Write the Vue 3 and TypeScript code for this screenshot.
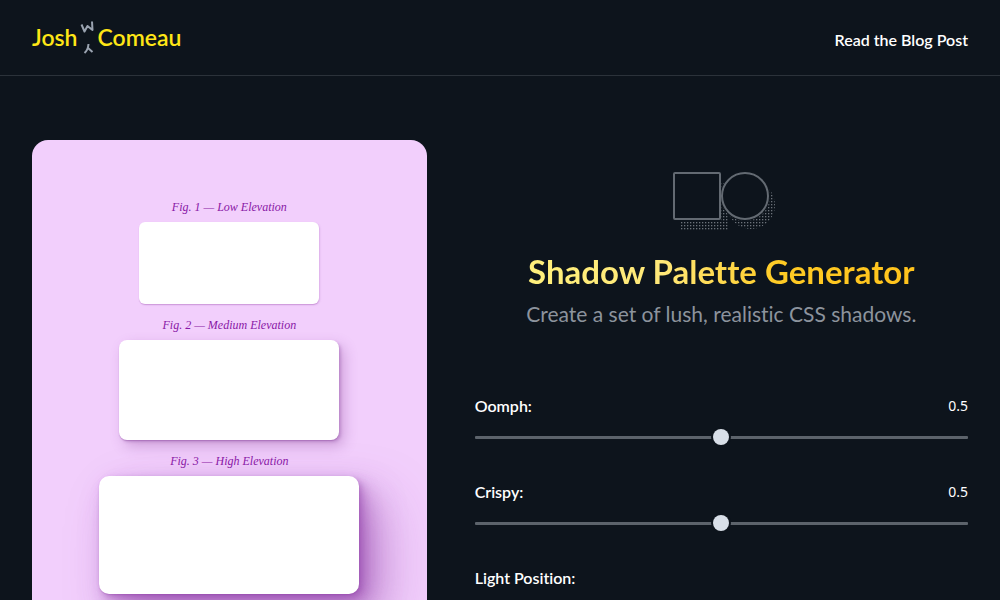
<script setup lang="ts">
import { ref } from 'vue'

interface Figure {
  id: string
  caption: string
}

interface Setting {
  id: string
  label: string
  value: number
}

const figures: Figure[] = [
  { id: 'low', caption: 'Fig. 1 — Low Elevation' },
  { id: 'medium', caption: 'Fig. 2 — Medium Elevation' },
  { id: 'high', caption: 'Fig. 3 — High Elevation' },
]

const settings = ref<Setting[]>([
  { id: 'oomph', label: 'Oomph:', value: 0.5 },
  { id: 'crispy', label: 'Crispy:', value: 0.5 },
])
</script>

<template>
  <div class="page">
    <header class="header">
      <a class="logo" href="#">
        <span>Josh</span>
        <svg class="initial" width="20" height="36" viewBox="0 0 20 36" aria-hidden="true">
          <path d="M4.5 5.5 L7.5 12.5 L10.5 7 L15.5 11 L15 2.5" />
          <path d="M7.5 34 Q11 31 11.5 25 M11 29 L15.5 33" />
        </svg>
        <span>Comeau</span>
      </a>
      <a class="post-link" href="#">Read the Blog Post</a>
    </header>

    <main class="main">
      <section class="preview">
        <figure v-for="figure in figures" :key="figure.id" class="figure">
          <figcaption>{{ figure.caption }}</figcaption>
          <div class="box" :class="figure.id"></div>
        </figure>
      </section>

      <section class="generator">
        <div class="intro">
          <svg class="emblem" width="98" height="60" viewBox="0 0 98 60" aria-hidden="true">
            <defs>
              <pattern id="dots" width="3" height="3" patternUnits="userSpaceOnUse">
                <rect x="0" y="0" width="1.3" height="1.3" fill="#6b727a" />
              </pattern>
              <mask id="outside">
                <rect width="110" height="60" fill="#fff" />
                <rect width="49" height="50" fill="#000" />
                <circle cx="73" cy="25" r="25" fill="#000" />
              </mask>
            </defs>
            <g mask="url(#outside)" fill="url(#dots)">
              <rect x="8" y="11" width="48" height="48" />
              <circle cx="79" cy="34" r="24" />
            </g>
            <rect class="outline" x="2" y="2" width="46" height="46" rx="1" />
            <circle class="outline" cx="73" cy="25" r="23" />
          </svg>
          <h1>Shadow Palette Generator</h1>
          <p>Create a set of lush, realistic CSS shadows.</p>
        </div>

        <form class="controls">
          <div v-for="setting in settings" :key="setting.id" class="control">
            <div class="control-head">
              <label :for="setting.id">{{ setting.label }}</label>
              <output :for="setting.id">{{ setting.value }}</output>
            </div>
            <input
              :id="setting.id"
              v-model.number="setting.value"
              type="range"
              min="0"
              max="1"
              step="0.01"
            />
          </div>
          <div class="control">
            <div class="control-head">
              <span>Light Position:</span>
            </div>
          </div>
        </form>
      </section>
    </main>
  </div>
</template>

<style>
html {
  background: #0d141c;
  scrollbar-width: none;
}
</style>

<style scoped>
.page {
  color: #fff;
  font-family: Lato, 'Noto Sans', sans-serif;
  font-size: 16px;
  font-variant-ligatures: none;
  line-height: 24px;
}

.header {
  display: flex;
  align-items: center;
  justify-content: space-between;
  padding: 19px 32px 20px;
  border-bottom: 1px solid #2b323a;
}

.logo {
  display: flex;
  align-items: center;
  color: #ffe616;
  font-size: 23px;
  font-weight: 600;
  text-decoration: none;
}

.initial {
  fill: none;
  stroke: #9aa3b0;
  stroke-width: 2;
  stroke-linejoin: round;
}

.post-link {
  margin-top: 6px;
  color: inherit;
  font-weight: 600;
  text-decoration: none;
}

.main {
  display: grid;
  grid-template-columns: 4fr 5fr;
  gap: 48px;
  padding: 64px 32px;
}

.preview {
  display: flex;
  flex-direction: column;
  align-items: center;
  gap: 12px;
  padding: 58px 16px;
  border-radius: 16px;
  background: #f2cffc;
  overflow: hidden;
}

.figure {
  display: flex;
  flex-direction: column;
  align-items: center;
  gap: 6px;
  margin: 0;
}

figcaption {
  position: relative;
  z-index: 1;
  color: #8918a6;
  font-family: 'Liberation Serif', serif;
  font-size: 12px;
  font-style: italic;
  line-height: 18px;
}

.box {
  background: #fff;
}

.low {
  width: 180px;
  height: 82px;
  border-radius: 6px;
  box-shadow: 0 1px 1px rgb(145 65 165 / 0.26), 1px 1px 2px rgb(145 65 165 / 0.2);
}

.medium {
  width: 220px;
  height: 100px;
  border-radius: 8px;
  box-shadow:
    0 1px 1px rgb(130 60 150 / 0.3),
    2px 2px 3px rgb(130 60 150 / 0.28),
    5px 6px 14px rgb(130 60 150 / 0.32);
}

.high {
  width: 260px;
  height: 118px;
  border-radius: 10px;
  box-shadow:
    0 1px 1px rgb(135 50 160 / 0.2),
    2px 2px 4px rgb(135 50 160 / 0.2),
    4px 4px 8px rgb(135 50 160 / 0.2),
    7px 8px 16px rgb(135 50 160 / 0.26),
    14px 16px 32px rgb(135 50 160 / 0.34),
    25px 28px 56px rgb(135 50 160 / 0.34);
}

.generator {
  min-width: 0;
  padding-top: 31px;
}

.intro {
  text-align: center;
}

.emblem {
  display: block;
  margin: 0 auto;
  overflow: visible;
}

.outline {
  fill: none;
  stroke: #636a72;
  stroke-width: 2;
}

h1 {
  width: fit-content;
  margin: 20px auto 0;
  background: linear-gradient(90deg, #fff07c 0%, #ffe878 35%, #ffcb24 65%, #ffc31c 100%);
  background-clip: text;
  color: transparent;
  font-size: 33px;
  font-weight: 700;
  line-height: 40px;
}

.intro p {
  margin: 9px 0 0;
  color: #8c939d;
  font-size: 21px;
  line-height: 28px;
}

.controls {
  display: flex;
  flex-direction: column;
  gap: 35px;
  margin-top: 66px;
}

.control {
  display: flex;
  flex-direction: column;
  gap: 11px;
}

.control-head {
  display: flex;
  justify-content: space-between;
  font-weight: 600;
}

output {
  font-family: 'Noto Sans', sans-serif;
  font-size: 14px;
  font-weight: 400;
}

input[type='range'] {
  appearance: none;
  width: 100%;
  height: 16px;
  margin: 0;
  background: transparent;
}

input[type='range']::-webkit-slider-runnable-track {
  height: 3px;
  border-radius: 1px;
  background: #5c636b;
}

input[type='range']::-webkit-slider-thumb {
  appearance: none;
  width: 16px;
  height: 16px;
  margin-top: -7px;
  border-radius: 50%;
  background: #d8dfe8;
  box-shadow: 0 0 0 2px #0d141c;
}
</style>
